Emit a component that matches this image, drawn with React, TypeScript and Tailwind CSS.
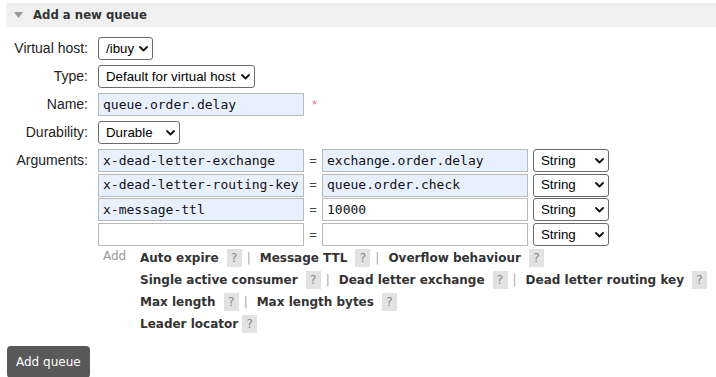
import { ChevronDown } from 'lucide-react'

const sans = { fontFamily: '"Liberation Sans", Arial, sans-serif' }

const Select = ({ value, width }: { value: string; width: string }) => {
  return (
    <div
      className={
        'flex h-[23px] items-center justify-between rounded-[3px] border border-[#6b6b6b] bg-white pl-[7px] pr-[4px] text-[13.3px] text-black ' +
        width
      }
    >
      <span>{value}</span>
      <svg width="9" height="6" viewBox="0 0 9 6" className="shrink-0">
        <polyline
          points="1,1 4.5,4.5 8,1"
          fill="none"
          stroke="#111"
          strokeWidth="1.8"
          strokeLinecap="round"
          strokeLinejoin="round"
        />
      </svg>
    </div>
  )
}

const Input = ({ value, filled }: { value?: string; filled?: boolean }) => {
  const bg = filled ? ' bg-[#e8f0fe] ' : ' bg-white '
  return (
    <div
      className={
        'flex h-[23px] w-[206px] items-center border border-[#b9b9b9] px-[4px] font-["DejaVu_Sans_Mono",monospace] text-[13px] text-[#111]' +
        bg
      }
    >
      {value}
    </div>
  )
}

const Help = () => (
  <span className="ml-[8px] inline-flex h-[18px] w-[15px] items-center justify-center bg-[#e2e2e2] text-[12px] font-normal text-[#8a8a8a]">
    ?
  </span>
)

const Sep = () => <span className="ml-[5px] mr-[9px] font-normal text-[#aaa]">|</span>

const Opt = ({ name, last }: { name: string; last?: boolean }) => (
  <>
    <span>{name}</span>
    <Help />
    {!last && <Sep />}
  </>
)

const Row = ({ label, children }: { label: string; children: any }) => (
  <div className="flex items-center">
    <div className="w-[82px] text-right text-[14px] text-[#222]">{label}</div>
    <div className="ml-[10px] flex items-center">{children}</div>
  </div>
)

const ArgRow = ({ k, v, fk, fv }: { k?: string; v?: string; fk?: boolean; fv?: boolean }) => (
  <div className="flex items-center">
    <Input value={k} filled={fk} />
    <span className="w-[18px] text-center text-[13px] text-[#444]">=</span>
    <Input value={v} filled={fv} />
    <div className="ml-[5px]">
      <Select value="String" width="w-[76px]" />
    </div>
  </div>
)

export default function App() {
  const argRows = [
    { k: 'x-dead-letter-exchange', v: 'exchange.order.delay', fk: true, fv: true },
    { k: 'x-dead-letter-routing-key', v: 'queue.order.check', fk: true, fv: true },
    { k: 'x-message-ttl', v: '10000', fk: true, fv: false },
    { k: '', v: '', fk: false, fv: false },
  ]

  return (
    <div className="min-h-screen w-[716px] overflow-hidden bg-white pl-[6px] pt-[3px]" style={sans}>
      <div className="flex h-[24px] items-center bg-[#f0f0f0] pl-[8px]">
        <svg width="9" height="6" viewBox="0 0 9 6">
          <polygon points="0,0 9,0 4.5,6" fill="#9a9a9a" />
        </svg>
        <span className='ml-[10px] font-["DejaVu_Sans_Condensed","DejaVu_Sans",sans-serif] text-[13px] font-bold text-[#333]'>
          Add a new queue
        </span>
      </div>

      <div className="mt-[10px] flex flex-col gap-[5px]">
        <Row label="Virtual host:">
          <Select value="/ibuy" width="w-[55px]" />
        </Row>
        <Row label="Type:">
          <Select value="Default for virtual host" width="w-[157px]" />
        </Row>
        <Row label="Name:">
          <Input value="queue.order.delay" filled />
          <span className="ml-[8px] text-[13px] text-[#f27b8a]">*</span>
        </Row>
        <Row label="Durability:">
          <Select value="Durable" width="w-[82px]" />
        </Row>
        <div className="flex items-start">
          <div className="w-[82px] text-right text-[14px] leading-[23px] text-[#222]">Arguments:</div>
          <div className="ml-[10px] flex flex-col gap-[1.7px]">
            {argRows.map((r, i) => (
              <ArgRow key={i} k={r.k} v={r.v} fk={r.fk} fv={r.fv} />
            ))}
          </div>
        </div>
      </div>

      <div className='mt-[1px] flex font-["DejaVu_Sans",Verdana,sans-serif] text-[12px]'>
        <div className="ml-[97px] w-[37px] pt-[1px] leading-[16px] text-[#999]">Add</div>
        <div className="flex flex-col font-bold text-[#333]">
          <div className="flex h-[22px] items-center">
            <Opt name="Auto expire" />
            <Opt name="Message TTL" />
            <Opt name="Overflow behaviour" last />
          </div>
          <div className="flex h-[22px] items-center">
            <Opt name="Single active consumer" />
            <Opt name="Dead letter exchange" />
            <Opt name="Dead letter routing key" last />
          </div>
          <div className="flex h-[22px] items-center">
            <Opt name="Max length" />
            <Opt name="Max length bytes" last />
          </div>
          <div className="flex h-[22px] items-center">
            <span>Leader locator</span>
            <span className="ml-[4px] inline-flex h-[18px] w-[15px] items-center justify-center bg-[#e2e2e2] text-[12px] font-normal text-[#8a8a8a]">
              ?
            </span>
          </div>
        </div>
      </div>

      <button className='ml-[1px] mt-[11px] h-[32px] rounded-[4px] bg-[#595959] px-[9px] font-["DejaVu_Sans",Verdana,sans-serif] text-[12px] text-white'>
        Add queue
      </button>
    </div>
  )
}
